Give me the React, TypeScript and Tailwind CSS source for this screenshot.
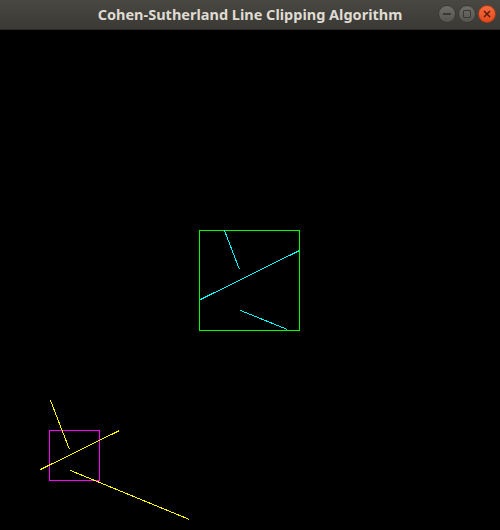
import React from "react";

export default function App() {
  return (
    <div className="w-[500px] h-[530px] flex flex-col bg-black overflow-hidden">
      <div className="relative h-[30px] shrink-0 bg-gradient-to-b from-[#494843] to-[#3a3935] border-b border-[#2c2b28] flex items-center justify-center">
        <span
          className="text-[14.5px] font-bold text-[#dfdbd2] leading-none"
          style={{ fontFamily: '"Noto Sans", "DejaVu Sans", sans-serif' }}
        >
          Cohen-Sutherland Line Clipping Algorithm
        </span>
        <div className="absolute right-[4px] top-[5px] flex gap-[2px]">
          <div className="w-[18px] h-[18px] rounded-full bg-gradient-to-b from-[#6e6d68] to-[#55544f] border border-[#3a3934] flex items-center justify-center">
            <div className="w-[8px] h-[1.5px] bg-[#3a3934]" />
          </div>
          <div className="w-[18px] h-[18px] rounded-full bg-gradient-to-b from-[#6e6d68] to-[#55544f] border border-[#3a3934] flex items-center justify-center">
            <div className="w-[8px] h-[8px] border border-[#3a3934] rounded-[1px]" />
          </div>
          <div className="w-[18px] h-[18px] rounded-full bg-gradient-to-b from-[#f36b3e] to-[#e5491a] border border-[#a83a14] flex items-center justify-center">
            <svg width="8" height="8" viewBox="0 0 8 8">
              <path d="M1 1 L7 7 M7 1 L1 7" stroke="#5a1e08" strokeWidth="1.5" />
            </svg>
          </div>
        </div>
      </div>
      <svg width="500" height="500" viewBox="0 0 500 500" shapeRendering="crispEdges" className="block">
        <rect x="199.5" y="200.5" width="100" height="100" fill="none" stroke="#00ff00" strokeWidth="1" />
        <g stroke="#00ffff" strokeWidth="1">
          <line x1="224.5" y1="200.5" x2="239.5" y2="239.5" />
          <line x1="200.5" y1="269.5" x2="299.5" y2="220.5" />
          <line x1="240.5" y1="280.5" x2="287.5" y2="299.5" />
        </g>
        <rect x="49.5" y="400.5" width="50" height="50" fill="none" stroke="#ff00ff" strokeWidth="1" />
        <g stroke="#ffff00" strokeWidth="1">
          <line x1="50.5" y1="370.5" x2="69.5" y2="419.5" />
          <line x1="40.5" y1="439.5" x2="119.5" y2="400.5" />
          <line x1="70.5" y1="440.5" x2="189.5" y2="489.5" />
        </g>
      </svg>
    </div>
  );
}
